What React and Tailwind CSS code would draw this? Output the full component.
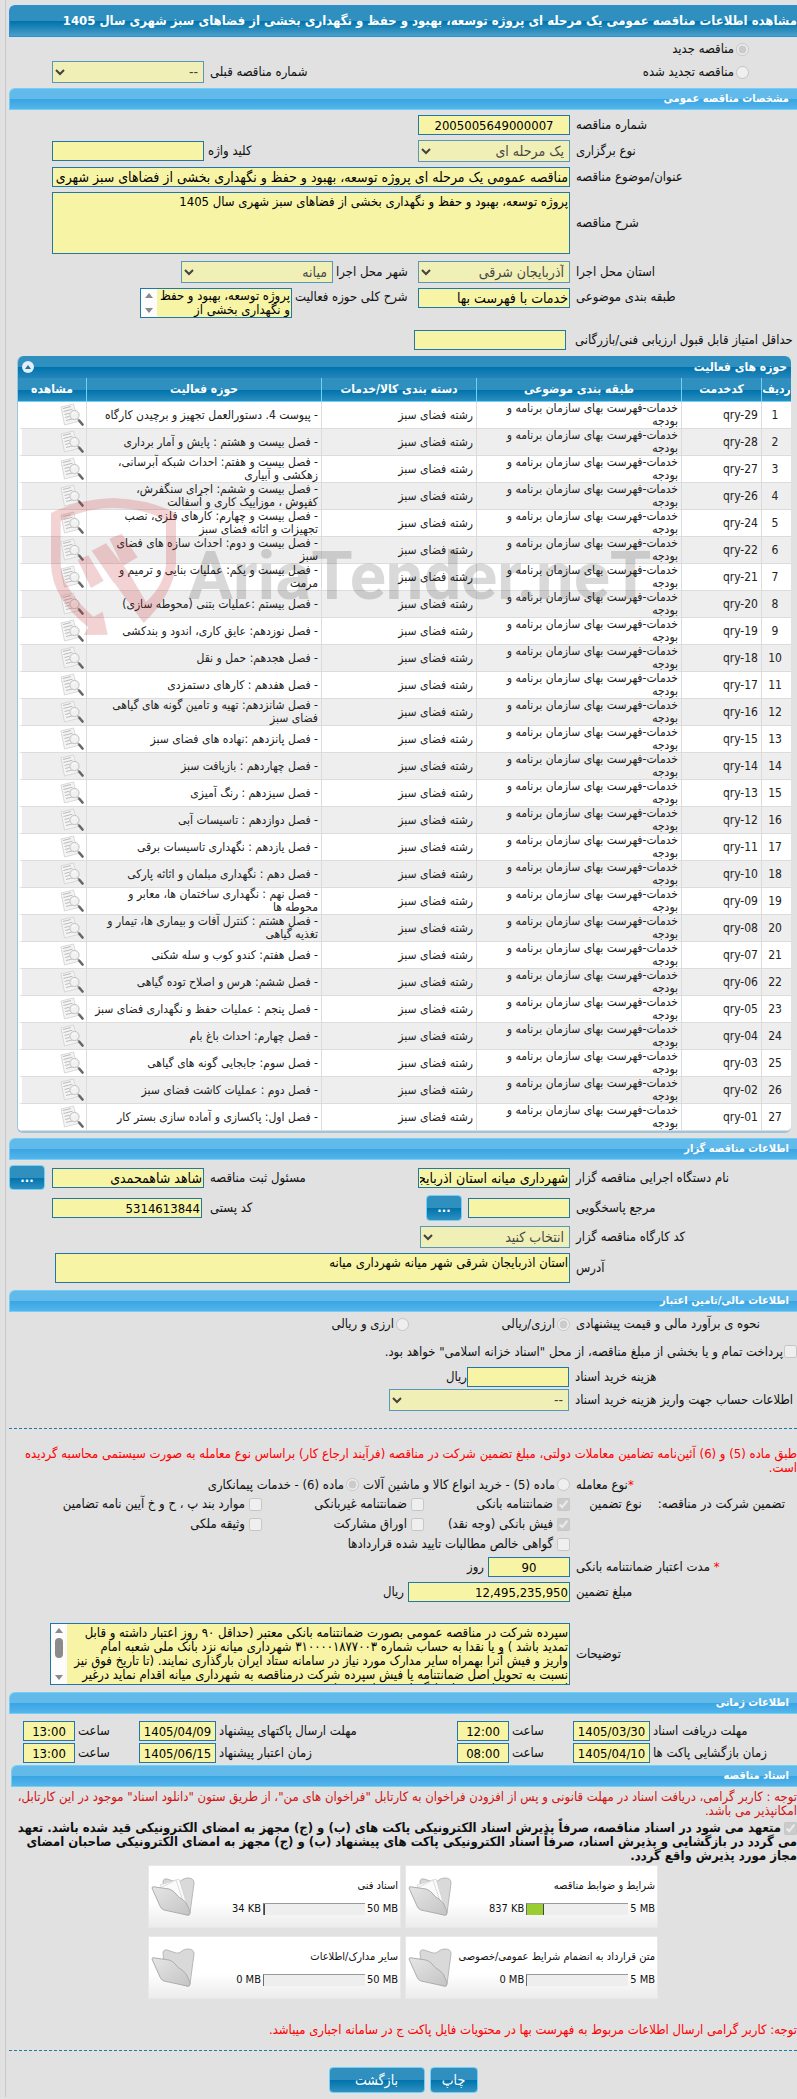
import React from 'react';
import clsx from 'clsx';

const SUBJECT = 'خدمات-فهرست بهای سازمان برنامه و بودجه';
const CATEGORY = 'رشته فضای سبز';

const activities = [
  { code: 'qry-29', title: '- پیوست 4. دستورالعمل تجهیز و برچیدن کارگاه' },
  { code: 'qry-28', title: '- فصل بیست و هشتم : پایش و آمار برداری' },
  { code: 'qry-27', title: '- فصل بیست و هفتم: احداث شبکه آبرسانی،\nزهکشی و آبیاری' },
  { code: 'qry-26', title: '- فصل بیست و ششم: اجرای سنگفرش،\nکفپوش ، موزاییک کاری و آسفالت' },
  { code: 'qry-24', title: '- فصل بیست و چهارم: کارهای فلزی، نصب\nتجهیزات و اثاثه فضای سبز' },
  { code: 'qry-22', title: '- فصل بیست و دوم: احداث سازه های فضای\nسبز' },
  { code: 'qry-21', title: '- فصل بیست و یکم: عملیات بنایی و ترمیم و\nمرمت' },
  { code: 'qry-20', title: '- فصل بیستم :عملیات بتنی (محوطه سازی)' },
  { code: 'qry-19', title: '- فصل نوزدهم: عایق کاری، اندود و بندکشی' },
  { code: 'qry-18', title: '- فصل هجدهم: حمل و نقل' },
  { code: 'qry-17', title: '- فصل هفدهم : کارهای دستمزدی' },
  { code: 'qry-16', title: '- فصل شانزدهم: تهیه و تامین گونه های گیاهی\nفضای سبز' },
  { code: 'qry-15', title: '- فصل پانزدهم :نهاده های فضای سبز' },
  { code: 'qry-14', title: '- فصل چهاردهم : بازیافت سبز' },
  { code: 'qry-13', title: '- فصل سیزدهم : رنگ آمیزی' },
  { code: 'qry-12', title: '- فصل دوازدهم : تاسیسات آبی' },
  { code: 'qry-11', title: '- فصل یازدهم : نگهداری تاسیسات برقی' },
  { code: 'qry-10', title: '- فصل دهم : نگهداری مبلمان و اثاثه پارکی' },
  { code: 'qry-09', title: '- فصل نهم : نگهداری ساختمان ها، معابر و\nمحوطه ها' },
  { code: 'qry-08', title: '- فصل هشتم : کنترل آفات و بیماری ها، تیمار و\nتغذیه گیاهی' },
  { code: 'qry-07', title: '- فصل هفتم: کندو کوب و سله شکنی' },
  { code: 'qry-06', title: '- فصل ششم: هرس و اصلاح توده گیاهی' },
  { code: 'qry-05', title: '- فصل پنجم : عملیات حفظ و نگهداری فضای سبز' },
  { code: 'qry-04', title: '- فصل چهارم: احداث باغ بام' },
  { code: 'qry-03', title: '- فصل سوم: جابجایی گونه های گیاهی' },
  { code: 'qry-02', title: '- فصل دوم : عملیات کاشت فضای سبز' },
  { code: 'qry-01', title: '- فصل اول:  پاکسازی و آماده سازی بستر کار' },
];

const documents = [
  { title: 'شرایط و ضوابط مناقصه', max: '5 MB', used: '837 KB', percent: 17, full: true },
  { title: 'اسناد فنی', max: '50 MB', used: '34 KB', percent: 1, full: true },
  { title: 'متن قرارداد به انضمام شرایط عمومی/خصوصی', max: '5 MB', used: '0 MB', percent: 0, full: false },
  { title: 'سایر مدارک/اطلاعات', max: '50 MB', used: '0 MB', percent: 0, full: false },
];

const NOTES = `سپرده شرکت در مناقصه عمومی بصورت ضمانتنامه بانکی معتبر (حداقل ۹۰ روز اعتبار داشته و قابل
تمدید باشد ) و یا نقدا به حساب شماره ۳۱۰۰۰۰۱۸۷۷۰۰۳ شهرداری میانه نزد بانک ملی شعبه امام
واریز و فیش آنرا بهمراه سایر مدارک مورد نیاز در سامانه ستاد ایران بارگذاری نمایند. (تا تاریخ فوق نیز
نسبت به تحویل اصل ضمانتنامه یا فیش سپرده شرکت درمناقصه به شهرداری میانه اقدام نماید درغیر
اینصورت پیشنهاد مربوطه بازگشایی نخواهد شد.)`;

const fieldBase = 'block border border-[#1f78a8] bg-[#f7f5a5] text-black px-px rounded-none';

const TextBox = ({ className, size = 'text-[13px]', ...props }) => (
  <input type="text" readOnly className={clsx(fieldBase, size, 'h-5', className)} {...props} />
);

const Select = ({ className, value, id }) => (
  <select id={id} disabled className={clsx(fieldBase, 'h-[22px] text-[14px] opacity-70', className)}>
    <option>{value}</option>
  </select>
);

const Area = ({ className, ...props }) => (
  <textarea
    readOnly
    className={clsx(fieldBase, 'resize-none pt-0.5 text-[13px] leading-[14px]', className)}
    {...props}
  />
);

// textarea with an always visible scrollbar on the left
const ScrollArea = ({ className, textClass, thumb, ...props }) => (
  <div className={clsx('flex overflow-hidden border border-[#1f78a8] bg-[#f7f5a5]', className)}>
    <textarea
      readOnly
      className={clsx(
        'min-w-0 flex-1 resize-none overflow-x-hidden overflow-y-auto px-px leading-[14px] text-black [scrollbar-width:none]',
        textClass
      )}
      {...props}
    />
    <div className="flex w-4 flex-col items-center justify-between bg-[#fcfcfc] py-1" aria-hidden="true">
      <svg width="8" height="5" viewBox="0 0 8 5" fill="#8a8a8a">
        <path d="M0 5 4 0l4 5Z" />
      </svg>
      {thumb && <div className="mb-3 h-5 w-2 rounded-full bg-[#8b8b8b]" />}
      <svg width="8" height="5" viewBox="0 0 8 5" fill="#8a8a8a">
        <path d="M0 0 4 5l4-5Z" />
      </svg>
    </div>
  </div>
);

const Label = ({ className, children, ...props }) => (
  <label className={clsx('block text-left whitespace-nowrap', className)} {...props}>
    {children}
  </label>
);

const SectionTitle = ({ children, className }) => (
  <h2
    className={clsx(
      'h-[22px] rounded-tl-md border border-r-0 border-[#6fd0f8] bg-[linear-gradient(#62baea_0%,#62baea_50%,#38a5e3_51%,#56b4ea_100%)] pr-2 text-[11px] leading-5 font-bold text-white',
      className
    )}
  >
    {children}
  </h2>
);

const Button = ({ children, className, ...props }) => (
  <button
    type="button"
    className={clsx(
      'rounded-[4px] border border-[#6fd0f8] bg-[linear-gradient(#2f90c0_0%,#2f90c0_50%,#0073ac_51%,#2f90c0_100%)] text-white',
      className
    )}
    {...props}
  >
    {children}
  </button>
);

const Radio = ({ name, checked, children, className }) => (
  <label className={clsx('flex items-center gap-0.5 whitespace-nowrap', className)}>
    <input type="radio" name={name} defaultChecked={checked} disabled className="h-[13px] w-[13px]" />
    {children}
  </label>
);

const Check = ({ checked, children, className }) => (
  <label className={clsx('flex items-center gap-1 whitespace-nowrap', className)}>
    <input type="checkbox" defaultChecked={checked} disabled className="h-[13px] w-[13px]" />
    {children}
  </label>
);

const ViewIcon = () => (
  <svg width="24" height="24" viewBox="0 0 24 24" fill="none" aria-hidden="true">
    <path d="M1 4 13.500 1l4.500 17.500L4.500 22Z" fill="#f4f4f4" stroke="#d0d0d0" strokeWidth=".8" />
    <path d="m3 5.500 8-2M3.500 8.500l9-2.300M4.500 11.500l5-1.300M5.200 14.500l4.500-1.100M6 17.500l7-1.700" stroke="#b4b4b4" strokeWidth=".9" />
    <circle cx="14.500" cy="12" r="4.600" fill="#f1f1f1" fillOpacity=".9" stroke="#c2c2c2" />
    <path d="M12 11q1.500-2 4-1.200" stroke="#fff" />
    <path d="m18 16 1.500 1.700" stroke="#9a9a9a" strokeWidth="1.600" />
    <path d="m19.500 18 3 3.500" stroke="#666" strokeWidth="2.600" strokeLinecap="round" />
  </svg>
);

const FolderIcon = ({ full }) => (
  <svg width="44" height="42" viewBox="0 0 44 42" aria-hidden="true">
    <defs>
      <linearGradient id="folderFront" x1="0" y1="0" x2="1" y2="1">
        <stop offset="0" stopColor="#e6e6e6" />
        <stop offset="1" stopColor="#c4c4c4" />
      </linearGradient>
    </defs>
    <path
      d="M12 5q1-3 4-2l9 3q3 1 6-2 2-2 6-2 6 0 6 5l-4 30q-1 3-3 2L14 32Z"
      fill="#d9d9d9"
      stroke="#b8b8b8"
    />
    {full && (
      <g fill="#fbfbfb" stroke="#d0d0d0" strokeWidth=".7">
        <path d="M9 9 28 3l8 26-12 6Z" />
        <path d="m9 12 16-8 9 27-8 5Z" />
      </g>
    )}
    <path
      d="M1 12q0-2 3-1l14 2q4 1 7 5 2 3 6 5 5 3 7 10l1 4q0 3-3 2L13 34q-3-1-4-4Z"
      fill="url(#folderFront)"
      stroke="#adadad"
    />
  </svg>
);

const Watermark = () => (
  <div className="pointer-events-none absolute top-[142px] left-[33px] flex select-none" dir="ltr" aria-hidden="true">
    <svg width="125" height="140" viewBox="0 0 375 420" fill="#c8232b" className="opacity-20">
      <path d="M0 45Q80 4 185 0q110 4 190 45v155q-10 90-97 175l-90-123 48-24 49 84q55-52 60-112V68q-65-38-160-38Q98 31 29 68v130q3 72 98 158l28-15 15 69-72 1 14-23Q2 300 0 198Z" />
      <path d="m80 185 32-13 46 76-38 22Z" />
      <path d="m122 158 43-22 73 94-50 24Z" />
      <path d="m175 122 37-15 48 71-45 27Z" />
    </svg>
    <span className="mt-12 ml-3 font-[Roboto] text-[67px] leading-[60px] font-bold text-black/15">
      AriaTender.neT
    </span>
  </div>
);

const headCell =
  'h-6 border-b border-[#6fd0f8] p-0 text-center align-middle text-[12px] font-bold text-white [&:not(:last-child)]:border-l';
const bodyCell = 'h-[27px] border-b border-l border-[#dcdcdc] p-0 pr-[3px]';

const ActivityTable = () => (
  <div className="relative mr-1.5 ml-2 overflow-hidden rounded-t-md rounded-b-md border-b-2 border-l border-[#9cc6de] bg-white text-[12px] leading-[13px] text-[#222]">
    <div className="flex h-[22px] items-center justify-between bg-[linear-gradient(#2f90c0_0%,#2f90c0_50%,#0073ac_51%,#2385bc_100%)] pr-1 pl-1">
      <h3 className="text-[12px] font-bold text-white">حوزه های فعالیت</h3>
      <button
        type="button"
        aria-label="بستن"
        className="flex h-3 w-3 items-center justify-center rounded-full bg-[#e2eefa]"
      >
        <svg width="6" height="4" viewBox="0 0 6 4" aria-hidden="true">
          <path d="M0 4 3 0l3 4Z" fill="#22709c" />
        </svg>
      </button>
    </div>
    <table className="w-full table-fixed border-separate border-spacing-0">
      <colgroup>
        <col className="w-[30px]" />
        <col className="w-[80px]" />
        <col />
        <col className="w-[155px]" />
        <col className="w-[235px]" />
        <col className="w-[68px]" />
      </colgroup>
      <thead className="bg-[linear-gradient(#2f90c0_0%,#2f90c0_50%,#0073ac_51%,#2f90c0_100%)]">
        <tr>
          <th className={headCell}>ردیف</th>
          <th className={headCell}>کدخدمت</th>
          <th className={headCell}>طبقه بندی موضوعی</th>
          <th className={headCell}>دسته بندی کالا/خدمات</th>
          <th className={headCell}>حوزه فعالیت</th>
          <th className={headCell}>مشاهده</th>
        </tr>
      </thead>
      <tbody>
        {activities.map((row, i) => (
          <tr key={row.code} className="even:bg-[#eeeeee]">
            <td className={clsx(bodyCell, 'text-center')}>{i + 1}</td>
            <td className={bodyCell}>
              <bdi dir="ltr">{row.code}</bdi>
            </td>
            <td className={clsx(bodyCell, 'pl-4')}>{SUBJECT}</td>
            <td className={bodyCell}>{CATEGORY}</td>
            <td className={clsx(bodyCell, 'whitespace-pre-line')}>{row.title}</td>
            <td className="h-[27px] border-b border-l-4 border-b-[#dcdcdc] border-l-white p-0 pr-0.5">
              <ViewIcon />
            </td>
          </tr>
        ))}
      </tbody>
    </table>
    <Watermark />
  </div>
);

const DateRow = ({ label, date, time, label2, date2, time2, id }) => (
  <div className="flex items-center pl-3.5">
    <Label htmlFor={`${id}-date`} className="w-[147px] pl-[3px]">{label}</Label>
    <TextBox id={`${id}-date`} className="w-[77px] text-center" defaultValue={date} />
    <Label htmlFor={`${id}-time`} className="w-16 pl-[3px]">ساعت</Label>
    <TextBox id={`${id}-time`} className="w-[52px] text-center" defaultValue={time} />
    <Label htmlFor={`${id}-date2`} className="flex-1 pl-[3px]">{label2}</Label>
    <TextBox id={`${id}-date2`} className="w-[77px] text-center" defaultValue={date2} />
    <Label htmlFor={`${id}-time2`} className="w-16 pl-[3px]">ساعت</Label>
    <TextBox id={`${id}-time2`} className="w-[52px] text-center" defaultValue={time2} />
  </div>
);

const DocumentCard = ({ doc }) => (
  <div className="flex h-[63px] w-[253px] items-center justify-between border border-[#e8e8e8] bg-linear-to-b from-white from-60% to-[#ececec] pr-0.5 pl-0.5 text-[11px]">
    <div className="flex flex-col gap-2.5">
      <div className="whitespace-nowrap">{doc.title}</div>
      <div className="flex items-center gap-0.5 text-[11px] leading-3">
        <span dir="ltr">{doc.max}</span>
        <div className="h-3 w-[102px] border-t border-l border-[#6d6d6d] border-t-[#999] bg-[#eeeeee]" dir="ltr">
          <div
            className={clsx('h-full bg-[#9acd32]', doc.percent > 0 && 'border-r border-[#444]')}
            style={{ width: `${doc.percent}%` }}
          />
        </div>
        <span dir="ltr">{doc.used}</span>
      </div>
    </div>
    <FolderIcon full={doc.full} />
  </div>
);

const pair = 'grid grid-cols-[227px_152px_1fr_152px] items-center pl-[43px]';

export default function App() {
  return (
    <div dir="rtl" lang="fa" className="min-h-screen overflow-hidden bg-[#e1e1e1] pl-[5px] font-['DejaVu_Sans_Condensed','DejaVu_Sans',sans-serif] text-[13px] leading-[14px] text-[#111]">
      <main className="border-l border-[#c9c9c9] pt-[5px] pb-1 pl-[3px]">
        <h1 className="h-8 overflow-hidden rounded-tl-md border border-r-0 border-[#2b8fdf] bg-[linear-gradient(#2f90c0_0%,#2f90c0_50%,#0073ac_51%,#4a9fc8_100%)] text-[13px] leading-[30px] font-bold whitespace-nowrap text-white">
          مشاهده اطلاعات مناقصه عمومی یک مرحله ای پروژه توسعه، بهبود و حفظ و نگهداری بخشی از فضاهای سبز شهری سال 1405
        </h1>

        <div className="flex h-6 items-center pr-12">
          <Radio name="kind" checked>مناقصه جدید</Radio>
        </div>
        <div className="flex items-center pr-12 pl-[43px]">
          <Radio name="kind">مناقصه تجدید شده</Radio>
          <Label htmlFor="prev" className="flex-1 pl-1.5">شماره مناقصه قبلی</Label>
          <Select id="prev" className="w-[152px]" value="--" />
        </div>

        <SectionTitle className="mt-[5px]">مشخصات مناقصه عمومی</SectionTitle>
        <div className="flex flex-col gap-[5px] pt-[5px] pb-1.5">
          <div className={pair}>
            <Label htmlFor="number" className="pl-1.5">شماره مناقصه</Label>
            <TextBox id="number" className="text-center" defaultValue="2005005649000007" />
          </div>
          <div className={pair}>
            <Label htmlFor="type" className="pl-1.5">نوع برگزاری</Label>
            <Select id="type" value="یک مرحله ای" />
            <Label htmlFor="keyword" className="pl-1">کلید واژه</Label>
            <TextBox id="keyword" />
          </div>
          <div className="flex items-center pl-[43px]">
            <Label htmlFor="subject" className="w-[227px] pl-1.5">عنوان/موضوع مناقصه</Label>
            <TextBox
              id="subject"
              size="text-[14px]"
              className="min-w-0 flex-1"
              defaultValue="مناقصه عمومی یک مرحله ای پروژه توسعه، بهبود و حفظ و نگهداری بخشی از فضاهای سبز شهری سال 1405"
            />
          </div>
          <div className="flex items-center pl-[43px]">
            <Label htmlFor="desc" className="w-[227px] pl-1.5">شرح مناقصه</Label>
            <Area
              id="desc"
              className="h-[62px] flex-1"
              defaultValue="پروژه توسعه، بهبود و حفظ و نگهداری بخشی از فضاهای سبز شهری سال 1405"
            />
          </div>
          <div className="mt-0.5 flex items-center">
            <Label htmlFor="province" className="w-[227px] pl-1.5">استان محل اجرا</Label>
            <Select id="province" className="w-[152px]" value="آذربایجان شرقی" />
            <Label htmlFor="city" className="w-[85px] pl-[3px]">شهر محل اجرا</Label>
            <Select id="city" className="w-[152px]" value="میانه" />
          </div>
          <div className="flex items-start">
            <Label htmlFor="class" className="w-[227px] pt-0.5 pl-1.5">طبقه بندی موضوعی</Label>
            <TextBox id="class" size="text-[14px]" className="w-[152px]" defaultValue="خدمات با فهرست بها" />
            <Label htmlFor="field" className="w-[126px] pt-0.5 pl-[3px]">شرح کلی حوزه فعالیت</Label>
            <ScrollArea
              id="field"
              className="h-[30px] w-[152px]"
              textClass="text-[13px]"
              defaultValue={'پروژه توسعه، بهبود و حفظ\nو نگهداری بخشی از\nفضاهای سبز شهری سال 1405'}
            />
          </div>
          <div className="mt-[7px] flex items-center">
            <Label htmlFor="score" className="w-[231px] pl-[9px]">حداقل امتیاز قابل قبول ارزیابی فنی/بازرگانی</Label>
            <TextBox id="score" className="w-[152px]" />
          </div>
        </div>

        <ActivityTable />

        <SectionTitle className="mt-[5px]">اطلاعات مناقصه گزار</SectionTitle>
        <div className="flex flex-col gap-[5px] pt-[5px] pb-[7px]">
          <div className="flex items-center">
            <Label htmlFor="org" className="w-[227px] pl-1.5">نام دستگاه اجرایی مناقصه گزار</Label>
            <TextBox id="org" size="text-[14px]" className="w-[152px]" defaultValue="شهرداری میانه استان اذربایجان شرقی" />
            <Label htmlFor="owner" className="flex-1 pl-1.5">مسئول ثبت مناقصه</Label>
            <TextBox id="owner" size="text-[14px]" className="w-[152px]" defaultValue="شاهد شاهمحمدی" />
            <Button className="mr-[7px] h-[25px] w-9 font-bold">...</Button>
          </div>
          <div className="flex items-center pl-[43px]">
            <Label htmlFor="ref" className="w-[227px] pl-1.5">مرجع پاسخگویی</Label>
            <TextBox id="ref" className="w-[102px]" />
            <Button className="mr-1.5 h-[26px] w-9 font-bold">...</Button>
            <Label htmlFor="zip" className="flex-1 pl-2">کد پستی</Label>
            <TextBox id="zip" className="w-[150px]" defaultValue="5314613844" />
          </div>
          <div className="flex items-center">
            <Label htmlFor="workshop" className="w-[227px] pl-1.5">کد کارگاه مناقصه گزار</Label>
            <Select id="workshop" className="w-[150px]" value="انتخاب کنید" />
          </div>
          <div className="flex items-center pl-[46px]">
            <Label htmlFor="address" className="w-[227px] pl-1.5">آدرس</Label>
            <Area
              id="address"
              className="h-[30px] flex-1"
              defaultValue="استان اذربایجان شرقی شهر میانه شهرداری میانه"
            />
          </div>
        </div>

        <SectionTitle>اطلاعات مالی/تامین اعتبار</SectionTitle>
        <div className="flex h-6 items-center">
          <span className="w-[227px] pl-1.5 text-left whitespace-nowrap">نحوه ی برآورد مالی و قیمت پیشنهادی</span>
          <Radio name="currency" checked className="w-[161px]">ارزی/ریالی</Radio>
          <Radio name="currency">ارزی و ریالی</Radio>
        </div>
        <div className="flex h-[31px] items-center">
          <Check className="gap-px">
            پرداخت تمام و یا بخشی از مبلغ مناقصه، از محل &quot;اسناد خزانه اسلامی&quot; خواهد بود.
          </Check>
        </div>
        <div className="flex flex-col gap-0.5">
          <div className="flex items-center">
            <Label htmlFor="cost" className="w-[228px] pl-1.5">هزینه خرید اسناد</Label>
            <TextBox id="cost" className="w-[102px]" />
            <span>ریال</span>
          </div>
          <div className="flex items-center">
            <Label htmlFor="account" className="w-[228px] pl-1.5">اطلاعات حساب جهت واریز هزینه خرید اسناد</Label>
            <Select id="account" className="w-[180px]" value="--" />
          </div>
        </div>
        <hr className="mt-[17px] border-dashed border-[#1f7aa8]" />

        <p className="pt-[18px] pl-1.5 text-[#f00]">
          طبق ماده (5) و (6) آئین‌نامه تضامین معاملات دولتی، مبلغ تضمین شرکت در مناقصه (فرآیند ارجاع کار) براساس نوع معامله به صورت سیستمی محاسبه گردیده است.
        </p>
        <div className="flex h-[19px] items-center">
          <span className="w-[227px] pl-1.5 text-left">
            <span className="text-[#f00]">*</span>نوع معامله
          </span>
          <Radio name="deal" className="w-[211px]">ماده (5) - خرید انواع کالا و ماشین آلات</Radio>
          <Radio name="deal" checked>ماده (6) - خدمات پیمانکاری</Radio>
        </div>
        <div className="flex">
          <div className="flex h-5 w-[227px] items-center gap-4 pr-3 whitespace-nowrap">
            <span>تضمین شرکت در مناقصه:</span>
            <span>نوع تضمین</span>
          </div>
          <div className="grid auto-rows-[20px] grid-cols-[146px_162px_auto]">
            <Check checked>ضمانتنامه بانکی</Check>
            <Check>ضمانتنامه غیربانکی</Check>
            <Check>موارد بند پ ، ح و خ آیین نامه تضامین</Check>
            <Check checked>فیش بانکی (وجه نقد)</Check>
            <Check>اوراق مشارکت</Check>
            <Check>وثیقه ملکی</Check>
            <Check className="col-span-3">گواهی خالص مطالبات تایید شده قراردادها</Check>
          </div>
        </div>
        <div className="mt-[3px] flex items-center gap-1">
          <Label htmlFor="valid" className="w-[223px] pl-0.5">
            <span className="text-[#f00]">*</span> مدت اعتبار ضمانتنامه بانکی
          </Label>
          <TextBox id="valid" className="w-[82px] text-center" defaultValue="90" />
          <span>روز</span>
        </div>
        <div className="mt-[5px] flex items-center gap-1">
          <Label htmlFor="amount" className="w-[223px] pl-0.5">مبلغ تضمین</Label>
          <TextBox id="amount" className="w-[162px]" defaultValue="12,495,235,950" />
          <span>ریال</span>
        </div>
        <div className="mt-[21px] flex items-center pl-[41px]">
          <Label htmlFor="notes" className="w-[227px] pl-1.5">توضیحات</Label>
          <ScrollArea id="notes" thumb className="h-[62px] flex-1" textClass="pt-0.5 text-[13px]" defaultValue={NOTES} />
        </div>

        <SectionTitle className="mt-[7px]">اطلاعات زمانی</SectionTitle>
        <div className="flex flex-col gap-0.5 pt-[7px] pb-0.5">
          <DateRow
            id="receive"
            label="مهلت دریافت اسناد"
            date="1405/03/30"
            time="12:00"
            label2="مهلت ارسال پاکتهای پیشنهاد"
            date2="1405/04/09"
            time2="13:00"
          />
          <DateRow
            id="open"
            label="زمان بازگشایی پاکت ها"
            date="1405/04/10"
            time="08:00"
            label2="زمان اعتبار پیشنهاد"
            date2="1405/06/15"
            time2="13:00"
          />
        </div>

        <SectionTitle className="ml-0.5">اسناد مناقصه</SectionTitle>
        <p className="pt-[3px] text-[#d01414]">
          توجه : کاربر گرامی، دریافت اسناد در مهلت قانونی و پس از افزودن فراخوان به کارتابل &quot;فراخوان های من&quot;، از طریق ستون &quot;دانلود اسناد&quot; موجود در این کارتابل، امکانپذیر می باشد.
        </p>
        <label className="block pt-[3px] font-bold">
          <input type="checkbox" defaultChecked disabled className="ml-[3px] h-[13px] w-[13px] align-bottom" />
          متعهد می شود در اسناد مناقصه، صرفاً پذیرش اسناد الکترونیکی پاکت های (ب) و (ج) مجهز به امضای الکترونیکی قید شده باشد. تعهد می گردد در بازگشایی و پذیرش اسناد، صرفاً اسناد الکترونیکی پاکت های پیشنهاد (ب) و (ج) مجهز به امضای الکترونیکی صاحبان امضای مجاز مورد پذیرش واقع گردد.
        </label>

        <div className="mx-auto mt-0.5 grid w-fit grid-cols-2 gap-x-1 gap-y-2">
          {documents.map((doc) => (
            <DocumentCard key={doc.title} doc={doc} />
          ))}
        </div>

        <p className="pt-6 text-[#f00]">
          توجه: کاربر گرامی ارسال اطلاعات مربوط به فهرست بها در محتویات فایل پاکت ج در سامانه اجباری میباشد.
        </p>
        <hr className="mt-[13px] border-dashed border-[#1f7aa8]" />
        <div className="mt-4 flex justify-center gap-[5px]">
          <Button className="h-[26px] w-12 text-[14px]">چاپ</Button>
          <Button className="h-[26px] w-24 text-[14px]">بازگشت</Button>
        </div>
      </main>
    </div>
  );
}
